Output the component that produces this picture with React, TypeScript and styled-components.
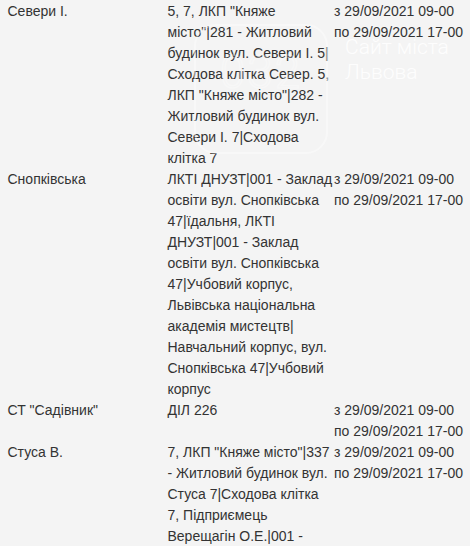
import styled, { createGlobalStyle } from "styled-components";

type Outage = {
  street: string;
  houses: string;
  from: string;
  to: string;
};

const outages: Outage[] = [
  {
    street: "Севери І.",
    houses:
      '5, 7, ЛКП "Княже місто"|281 - Житловий будинок вул. Севери І. 5| Сходова клітка Север. 5, ЛКП "Княже місто"|282 - Житловий будинок вул. Севери І. 7|Сходова клітка 7',
    from: "з 29/09/2021 09-00",
    to: "по 29/09/2021 17-00",
  },
  {
    street: "Снопківська",
    houses:
      "ЛКТІ ДНУЗТ|001 - Заклад освіти вул. Снопківська 47|їдальня, ЛКТІ ДНУЗТ|001 - Заклад освіти вул. Снопківська 47|Учбовий корпус, Львівська національна академія мистецтв| Навчальний корпус, вул. Снопківська 47|Учбовий корпус",
    from: "з 29/09/2021 09-00",
    to: "по 29/09/2021 17-00",
  },
  {
    street: 'СТ "Садівник"',
    houses: "ДІЛ 226",
    from: "з 29/09/2021 09-00",
    to: "по 29/09/2021 17-00",
  },
  {
    street: "Стуса В.",
    houses:
      '7, ЛКП "Княже місто"|337 - Житловий будинок вул. Стуса 7|Сходова клітка 7, Підприємець Верещагін О.Е.|001 - Магазин вул. Стуса 7',
    from: "з 29/09/2021 09-00",
    to: "по 29/09/2021 17-00",
  },
];

const App: React.FC = () => {
  return (
    <>
      <GlobalStyle />
      <Page>
        <Table>
          {outages.map((row) => (
            <Row key={row.street}>
              <StreetCell>{row.street}</StreetCell>
              <HousesCell>{row.houses}</HousesCell>
              <TimeCell>
                <TimeLine>{row.from}</TimeLine>
                <TimeLine>{row.to}</TimeLine>
              </TimeCell>
            </Row>
          ))}
        </Table>
        <Watermark>
          <LogoBox>
            <LogoDigits>032</LogoDigits>
          </LogoBox>
          <SiteName>
            Сайт міста
            <br />
            Львова
          </SiteName>
        </Watermark>
      </Page>
    </>
  );
};

export default App;

const GlobalStyle = createGlobalStyle`
  html, body {
    margin: 0;
    padding: 0;
    background: #f4f4f4;
  }
  body {
    width: 470px;
    height: 546px;
    overflow: hidden;
  }
`;

const Page = styled.div`
  position: relative;
  width: 470px;
  height: 546px;
  overflow: hidden;
  background: #f4f4f4;
  font-family: "Liberation Sans", Arial, sans-serif;
  font-size: 14px;
  line-height: 21px;
  color: #333333;
`;

const Table = styled.div`
  display: flex;
  flex-direction: column;
  padding-top: 1px;
`;

const Row = styled.div`
  display: grid;
  grid-template-columns: 167.5px 166.5px 1fr;
  align-items: start;
`;

const StreetCell = styled.div`
  padding-left: 7.5px;
`;

const HousesCell = styled.div`
  word-wrap: break-word;
`;

const TimeCell = styled.div`
  display: flex;
  flex-direction: column;
  white-space: nowrap;
`;

const TimeLine = styled.span`
  display: block;
`;

const Watermark = styled.div`
  position: absolute;
  top: 24px;
  left: 194px;
  display: flex;
  align-items: flex-start;
  gap: 17px;
  pointer-events: none;
`;

const LogoBox = styled.div`
  width: 134px;
  height: 130px;
  box-sizing: border-box;
  border: 2px solid rgba(255, 255, 255, 0.4);
  border-radius: 22px;
  display: flex;
  align-items: center;
  justify-content: center;
`;

const LogoDigits = styled.span`
  font-family: Roboto, "Liberation Sans", sans-serif;
  font-weight: 300;
  font-size: 46px;
  letter-spacing: 2px;
  color: transparent;
  -webkit-text-stroke: 1.5px rgba(255, 255, 255, 0.3);
  margin-top: -34px;
`;

const SiteName = styled.div`
  margin-top: 11px;
  font-family: Roboto, "Liberation Sans", sans-serif;
  font-weight: 300;
  font-size: 21px;
  line-height: 25px;
  color: rgba(255, 255, 255, 0.9);
`;
